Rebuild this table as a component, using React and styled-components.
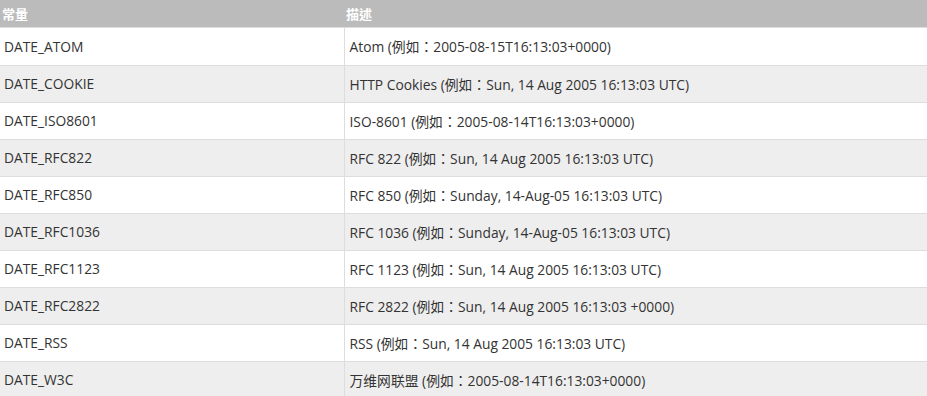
import React from "react";
import styled, { createGlobalStyle } from "styled-components";

const Global = createGlobalStyle`
  html, body { margin: 0; padding: 0; background: #fff; }
  body { font-family: "Open Sans", "Noto Sans CJK TC", sans-serif; }
`;

const Table = styled.table`
  width: 927px;
  border-collapse: collapse;
  border-spacing: 0;
  font-family: "Open Sans", "Noto Sans CJK TC", sans-serif;
  font-size: 13.8px;
  color: #333;
  table-layout: fixed;
`;

const HeadCell = styled.th`
  background: #bbb;
  color: #fff;
  font-weight: bold;
  font-size: 13px;
  text-align: left;
  height: 27px;
  padding: 0 0 0 2px;
  box-sizing: border-box;
  border-bottom: 1px solid #ddd;
  vertical-align: middle;
  width: ${(p) => p.$w || "auto"};
`;

const Row = styled.tr`
  background: ${(p) => (p.$alt ? "#eee" : "#fff")};
`;

const Cell = styled.td`
  height: ${(p) => (p.$firstRow ? "37px" : "36px")};
  padding: 0;
  box-sizing: content-box;
  border-bottom: 1px solid #ddd;
  border-left: ${(p) => (p.$second ? "1px solid #ddd" : "none")};
  padding-left: ${(p) => (p.$second ? "5px" : "4px")};
  vertical-align: middle;
  white-space: nowrap;
`;

const rows = [
  ["DATE_ATOM", "Atom (例如：2005-08-15T16:13:03+0000)"],
  ["DATE_COOKIE", "HTTP Cookies (例如：Sun, 14 Aug 2005 16:13:03 UTC)"],
  ["DATE_ISO8601", "ISO-8601 (例如：2005-08-14T16:13:03+0000)"],
  ["DATE_RFC822", "RFC 822 (例如：Sun, 14 Aug 2005 16:13:03 UTC)"],
  ["DATE_RFC850", "RFC 850 (例如：Sunday, 14-Aug-05 16:13:03 UTC)"],
  ["DATE_RFC1036", "RFC 1036 (例如：Sunday, 14-Aug-05 16:13:03 UTC)"],
  ["DATE_RFC1123", "RFC 1123 (例如：Sun, 14 Aug 2005 16:13:03 UTC)"],
  ["DATE_RFC2822", "RFC 2822 (例如：Sun, 14 Aug 2005 16:13:03 +0000)"],
  ["DATE_RSS", "RSS (例如：Sun, 14 Aug 2005 16:13:03 UTC)"],
  ["DATE_W3C", "万维网联盟 (例如：2005-08-14T16:13:03+0000)"],
];

export default function App() {
  return (
    <>
      <Global />
      <Table>
        <thead>
          <tr>
            <HeadCell $w="344px">常量</HeadCell>
            <HeadCell>描述</HeadCell>
          </tr>
        </thead>
        <tbody>
          {rows.map(([c, d], i) => (
            <Row key={c} $alt={i % 2 === 1}>
              <Cell $firstRow={i === 0}>{c}</Cell>
              <Cell $second $firstRow={i === 0}>{d}</Cell>
            </Row>
          ))}
        </tbody>
      </Table>
    </>
  );
}
